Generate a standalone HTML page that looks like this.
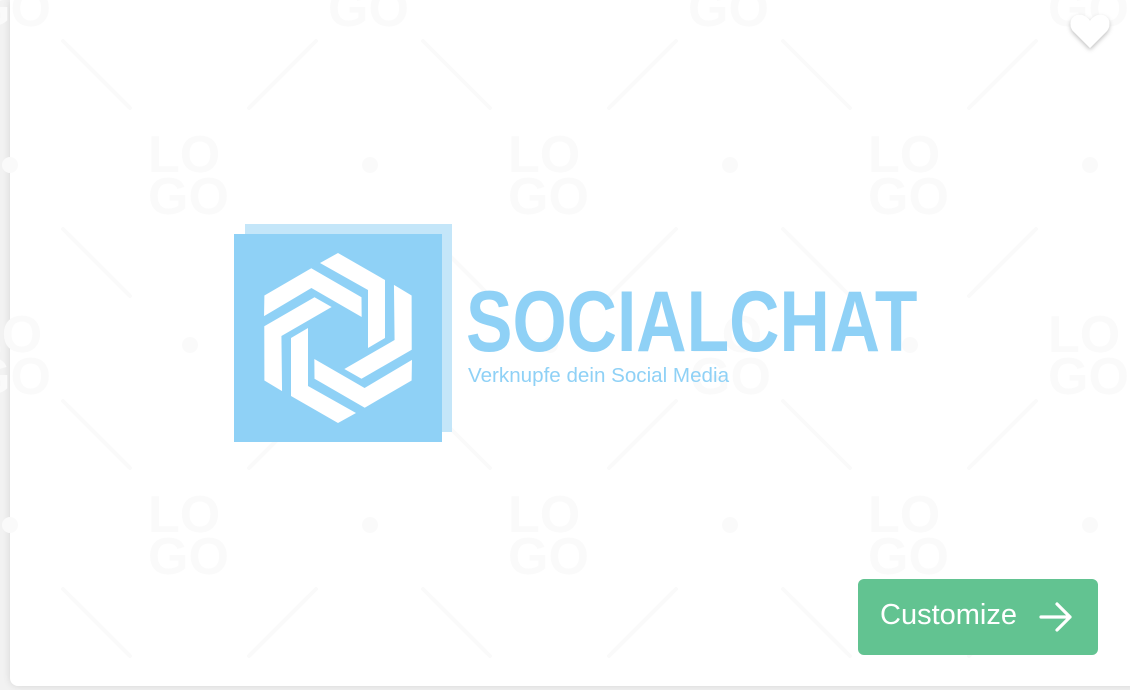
<!DOCTYPE html>
<html><head><meta charset="utf-8"><style>
html,body{margin:0;padding:0;width:1130px;height:690px;overflow:hidden;background:#f2f2f2;}
.card{position:absolute;left:10px;top:0;width:1130px;height:686px;background:#fff;box-shadow:0 0 8px rgba(0,0,0,.12);border-radius:0 0 0 8px;}
.wm{position:absolute;left:0;top:0;}
.title{position:absolute;left:466px;top:274px;font-family:"Liberation Sans",sans-serif;font-weight:bold;font-size:86px;line-height:96px;color:#8fd1f6;white-space:nowrap;transform-origin:left top;transform:scaleX(0.81);}
.tag{position:absolute;left:468px;top:364px;font-family:"Liberation Sans",sans-serif;font-size:20.6px;color:#8fd1f6;white-space:nowrap;}
.btn{position:absolute;left:858px;top:579px;width:240px;height:76px;background:#62c391;border-radius:6px;}
.btn span{position:absolute;left:22px;top:20px;font-family:"Liberation Sans",sans-serif;font-size:29px;color:#fff;}
</style></head><body>
<div class="card"></div>
<svg class="wm" width="1130" height="690" viewBox="0 0 1130 690">
 <g fill="none" stroke="#fafafa" stroke-width="4" stroke-linecap="round">
  <path d="M63 41 L130 108 M316 41 L249 108 M423 41 L490 108 M676 41 L609 108 M783 41 L850 108 M1036 41 L969 108"/>
  <path d="M63 229 L130 296 M316 229 L249 296 M423 229 L490 296 M676 229 L609 296 M783 229 L850 296 M1036 229 L969 296"/>
  <path d="M63 401 L130 468 M316 401 L249 468 M423 401 L490 468 M676 401 L609 468 M783 401 L850 468 M1036 401 L969 468"/>
  <path d="M63 589 L130 656 M316 589 L249 656 M423 589 L490 656 M676 589 L609 656 M783 589 L850 656 M1036 589 L969 656"/>
 </g>
 <g fill="#fafafa" font-family="Liberation Sans,sans-serif" font-weight="bold" font-size="52">
  <text x="148" y="172">LO</text><text x="148" y="214">GO</text>
  <text x="508" y="172">LO</text><text x="508" y="214">GO</text>
  <text x="868" y="172">LO</text><text x="868" y="214">GO</text>
  <text x="148" y="532">LO</text><text x="148" y="574">GO</text>
  <text x="508" y="532">LO</text><text x="508" y="574">GO</text>
  <text x="868" y="532">LO</text><text x="868" y="574">GO</text>
  <text x="-30" y="352">LO</text><text x="-30" y="394">GO</text>
  <text x="330" y="352">LO</text><text x="330" y="394">GO</text>
  <text x="690" y="352">LO</text><text x="690" y="394">GO</text>
  <text x="1048" y="352">LO</text><text x="1048" y="394">GO</text>
  <text x="328" y="26">GO</text><text x="688" y="26">GO</text><text x="1048" y="26">GO</text><text x="-30" y="26">GO</text>
  <circle cx="370" cy="165" r="8"/><circle cx="730" cy="165" r="8"/><circle cx="1090" cy="165" r="8"/><circle cx="10" cy="165" r="8"/>
  <circle cx="370" cy="525" r="8"/><circle cx="730" cy="525" r="8"/><circle cx="1090" cy="525" r="8"/><circle cx="10" cy="525" r="8"/>
  <circle cx="190" cy="345" r="8"/><circle cx="550" cy="345" r="8"/><circle cx="910" cy="345" r="8"/>
 </g>
 <rect x="245" y="224" width="207" height="208" fill="#c4e6f9"/>
 <rect x="234" y="234" width="208" height="208" fill="#8fd1f6"/>
 <g transform="translate(338,338)" fill="#fff">
  <polygon id="p" points="-18,-75 0,-85 47,-58 47,0 30,10 30,-48"/>
  <use href="#p" transform="rotate(60)"/>
  <use href="#p" transform="rotate(120)"/>
  <use href="#p" transform="rotate(180)"/>
  <use href="#p" transform="rotate(240)"/>
  <use href="#p" transform="rotate(300)"/>
 </g>
</svg>
<div class="title">SOCIALCHAT</div>
<div class="tag">Verknupfe dein Social Media</div>
<svg style="position:absolute;left:1066px;top:10px" width="48" height="44" viewBox="0 0 48 44">
 <defs><filter id="s" x="-30%" y="-30%" width="160%" height="160%"><feDropShadow dx="0" dy="2" stdDeviation="2" flood-opacity=".25"/></filter></defs>
 <path filter="url(#s)" fill="#fff" d="M24 38 L8 22 C2 16 4 6 12 5 C17 4 21 7 24 11 C27 7 31 4 36 5 C44 6 46 16 40 22 Z"/>
</svg>
<div class="btn"><span>Customize</span>
 <svg style="position:absolute;left:180px;top:22px" width="36" height="32" viewBox="0 0 36 32"><path d="M3 16 H32 M19 3 L32 16 L19 29" fill="none" stroke="#fff" stroke-width="3.2" stroke-linecap="round" stroke-linejoin="round"/></svg>
</div>
</body></html>
